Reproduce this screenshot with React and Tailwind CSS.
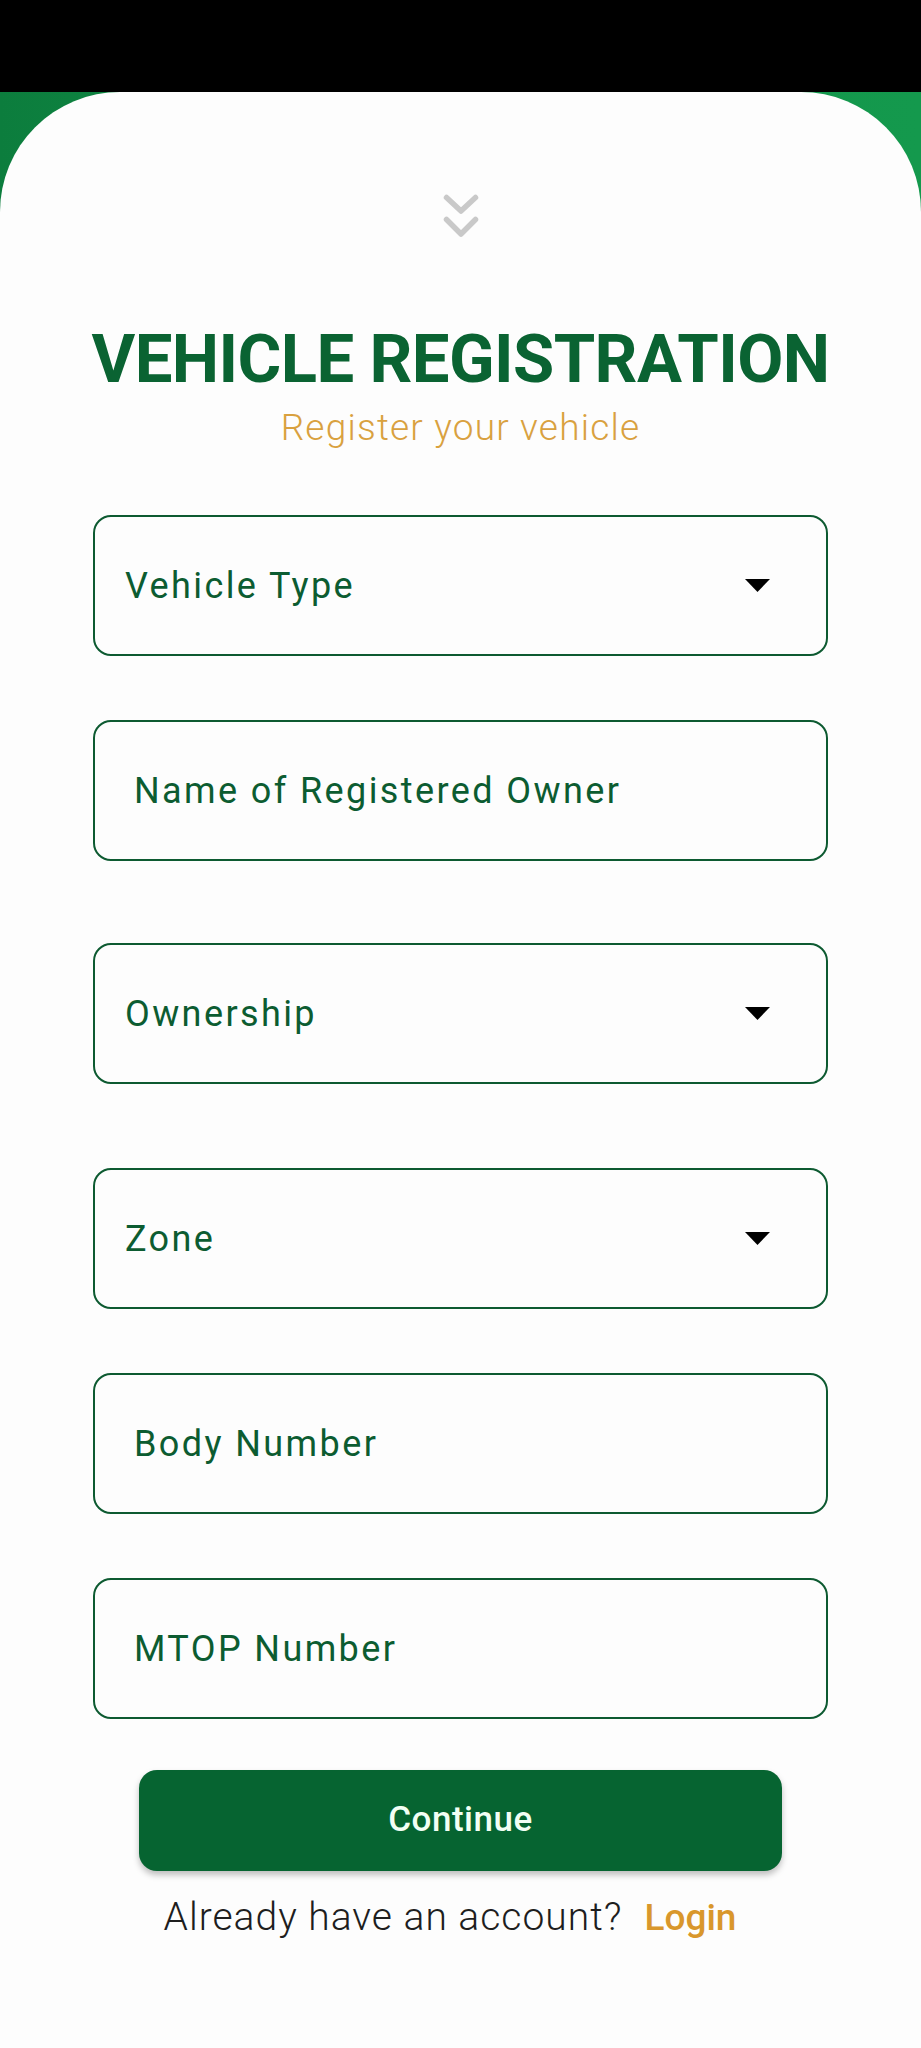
import React from "react";

const F = { fontFamily: "Roboto, 'Liberation Sans', sans-serif" };

function Caret() {
  return (
    <svg width="25" height="13" viewBox="0 0 25 13" className="block">
      <polygon points="0,0 25,0 12.5,13" fill="#000" />
    </svg>
  );
}

function Dropdown({ label, mt }) {
  return (
    <div
      className={`${mt} mx-[93px] h-[141px] rounded-[18px] border-[2.5px] border-[#0d5a31] flex items-center justify-between pl-[30px] pr-[56px]`}
    >
      <span className="text-[36px] leading-none tracking-[2.4px] text-[#0c5c31]" style={F}>
        {label}
      </span>
      <Caret />
    </div>
  );
}

function Input({ label, mt }) {
  return (
    <div
      className={`${mt} mx-[93px] h-[141px] rounded-[18px] border-[2.5px] border-[#0d5a31] flex items-center pl-[39px]`}
    >
      <span className="text-[36px] leading-none tracking-[2.4px] text-[#0c5c31]" style={F}>
        {label}
      </span>
    </div>
  );
}

export default function App() {
  return (
    <div className="w-[921px] h-[2048px] flex flex-col bg-black overflow-hidden" style={F}>
      <div className="h-[92px] bg-black shrink-0" />
      <div className="flex-1 bg-gradient-to-r from-[#0c7d3d] via-[#12924a] to-[#14994d]">
        <div className="h-full bg-[#fdfdfd] rounded-t-[120px] flex flex-col">
          <div className="mt-[101px] flex justify-center">
            <svg width="40" height="46" viewBox="0 0 40 46" className="block">
              <polyline
                points="5.5,4.5 20,18 34.5,4.5"
                fill="none"
                stroke="#c9c9c9"
                strokeWidth="5.5"
                strokeLinecap="round"
                strokeLinejoin="round"
              />
              <polyline
                points="5.5,26.5 20,41 34.5,26.5"
                fill="none"
                stroke="#c9c9c9"
                strokeWidth="5.5"
                strokeLinecap="round"
                strokeLinejoin="round"
              />
            </svg>
          </div>
          <h1
            className="mt-[87px] text-center text-[67px] leading-none font-bold tracking-[-0.6px] text-[#0a6332]"
            style={F}
          >
            VEHICLE REGISTRATION
          </h1>
          <p
            className="mt-[16px] text-center text-[37px] leading-none font-light tracking-[1.2px] text-[#d9a13f]"
            style={F}
          >
            Register your vehicle
          </p>

          <Dropdown label="Vehicle Type" mt="mt-[69px]" />
          <Input label="Name of Registered Owner" mt="mt-[64px]" />
          <Dropdown label="Ownership" mt="mt-[82px]" />
          <Dropdown label="Zone" mt="mt-[84px]" />
          <Input label="Body Number" mt="mt-[64px]" />
          <Input label="MTOP Number" mt="mt-[64px]" />

          <button
            className="mt-[51px] mx-[139px] h-[101px] rounded-[18px] bg-[#066431] text-[#f2fff4] text-[35px] font-medium tracking-[0.5px] shadow-[0_4px_6px_rgba(0,0,0,0.25)] flex items-center justify-center"
            style={F}
          >
            Continue
          </button>

          <div className="mt-[27px] flex justify-center items-baseline gap-[22px] pr-[21px]">
            <span className="text-[39px] leading-none font-light tracking-[1px] text-[#1e1e1e]" style={F}>
              Already have an account?
            </span>
            <span className="text-[37px] leading-none font-medium text-[#d9972c]" style={F}>
              Login
            </span>
          </div>
        </div>
      </div>
    </div>
  );
}
